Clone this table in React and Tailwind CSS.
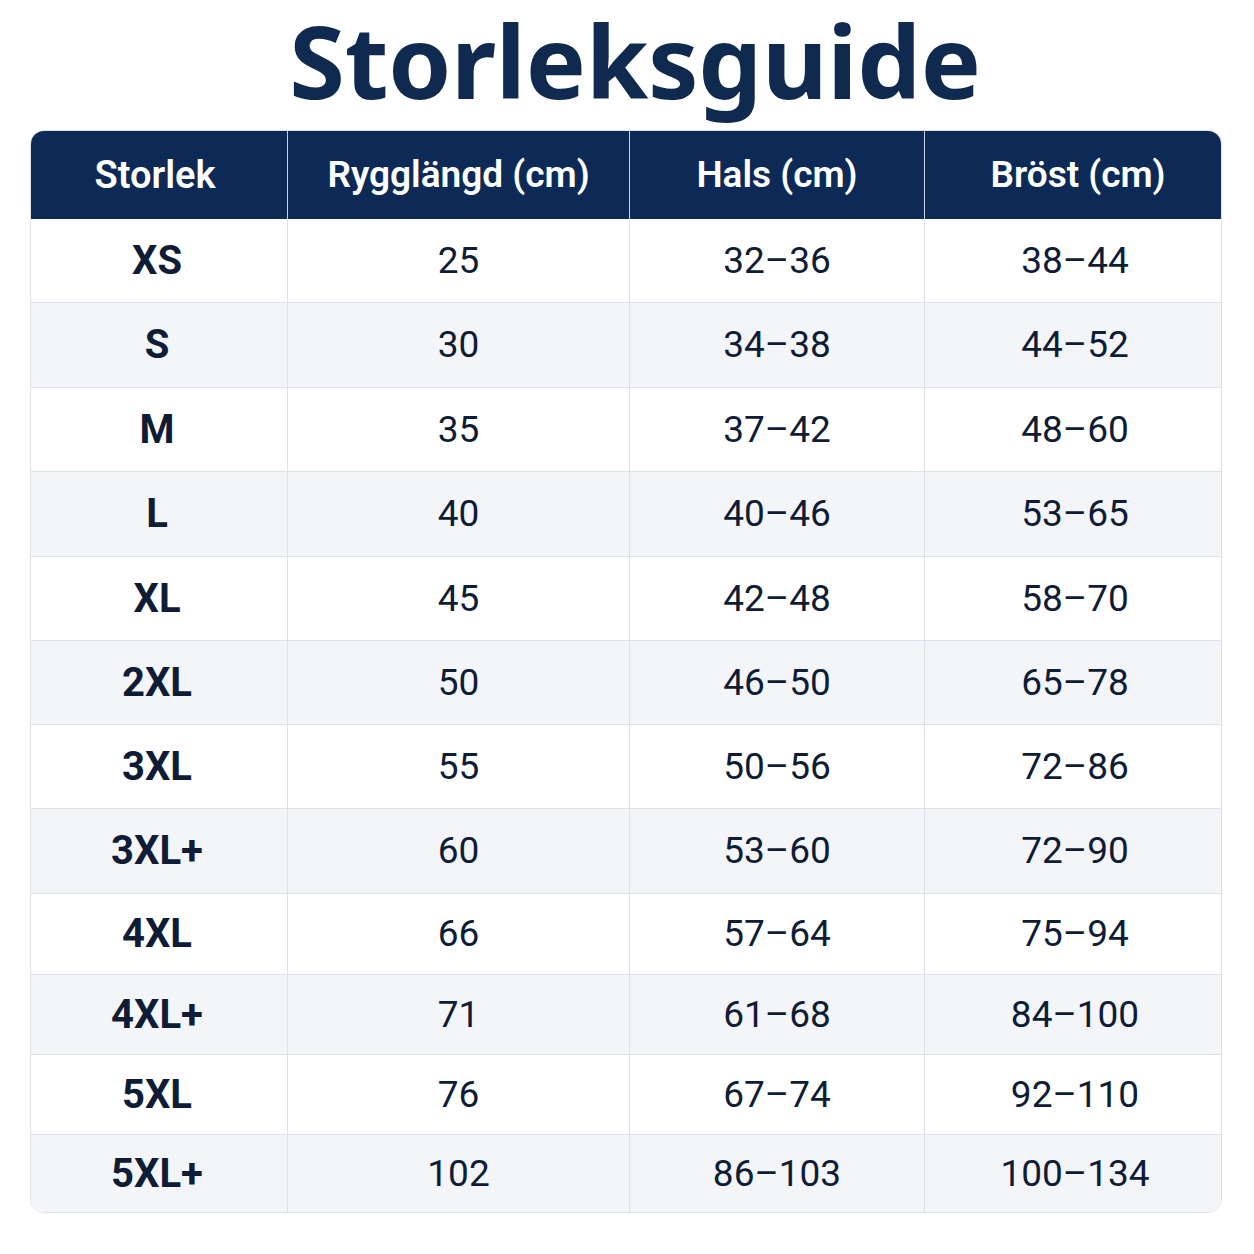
import React from 'react';

const rows = [
  { size: 'XS', back: '25', neck: '32–36', chest: '38–44', h: 84 },
  { size: 'S', back: '30', neck: '34–38', chest: '44–52', h: 85 },
  { size: 'M', back: '35', neck: '37–42', chest: '48–60', h: 84 },
  { size: 'L', back: '40', neck: '40–46', chest: '53–65', h: 85 },
  { size: 'XL', back: '45', neck: '42–48', chest: '58–70', h: 84 },
  { size: '2XL', back: '50', neck: '46–50', chest: '65–78', h: 84 },
  { size: '3XL', back: '55', neck: '50–56', chest: '72–86', h: 84 },
  { size: '3XL+', back: '60', neck: '53–60', chest: '72–90', h: 85 },
  { size: '4XL', back: '66', neck: '57–64', chest: '75–94', h: 81 },
  { size: '4XL+', back: '71', neck: '61–68', chest: '84–100', h: 80 },
  { size: '5XL', back: '76', neck: '67–74', chest: '92–110', h: 80 },
  { size: '5XL+', back: '102', neck: '86–103', chest: '100–134', h: 77 },
];

const cols = 'grid grid-cols-[256px_342px_295px_297px]';

export default function App() {
  return (
    <div className="w-[1254px] h-[1254px] bg-white text-[#0f1c36] font-['Roboto',sans-serif]">
      <div className="h-[130px] pl-[16px] text-center">
        <h1 className="pb-[10px] font-['Noto_Sans',sans-serif] text-[101px] leading-[1.2] font-bold text-[#0f2a4e] tracking-[-0.3px]">
          Storleksguide
        </h1>
      </div>

      <div className="ml-[30px] w-[1192px] rounded-[14px] border border-[#dde2ea] overflow-hidden">
        <div className={`${cols} h-[88px] bg-[#0c2a55] text-white text-[37px] font-semibold`}>
          {['Storlek', 'Rygglängd (cm)', 'Hals (cm)', 'Bröst (cm)'].map((t, i) => (
            <div
              key={t}
              className={`flex items-center justify-center ${i > 0 ? 'border-l border-[#c9d1de]' : ''} ${
                i === 3 ? 'pl-[10px]' : ''
              } ${i === 0 ? 'text-[38px] pr-[8px]' : ''}`}
            >
              {t}
            </div>
          ))}
        </div>

        {rows.map((r, idx) => (
          <div
            key={r.size}
            style={{ height: r.h }}
            className={`${cols} ${idx % 2 === 1 ? 'bg-[#f3f5f9]' : 'bg-white'} ${
              idx < rows.length - 1 ? 'border-b border-[#dde2ea]' : ''
            } text-[37px]`}
          >
            <div className="flex items-center justify-center pr-[4px] text-[40px] font-bold">{r.size}</div>
            <div className="flex items-center justify-center border-l border-[#dde2ea]">{r.back}</div>
            <div className="flex items-center justify-center border-l border-[#dde2ea]">{r.neck}</div>
            <div className="flex items-center justify-center border-l border-[#dde2ea] pl-[4px]">{r.chest}</div>
          </div>
        ))}
      </div>
    </div>
  );
}
